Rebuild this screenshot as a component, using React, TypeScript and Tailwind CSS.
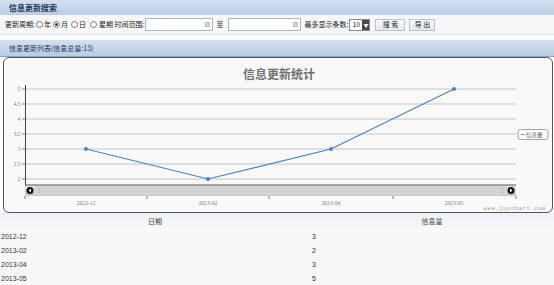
import React from "react";

const points = [
  { label: "2012-12", x: 85, v: 3 },
  { label: "2013-02", x: 207, v: 2 },
  { label: "2013-04", x: 330, v: 3 },
  { label: "2013-05", x: 453, v: 5 },
];

// value -> y in page coords (5 at 88, 2 at 178)
const yOf = (v: number) => 178 - (v - 2) * 30;

function Radio({ checked, className = "" }: { checked?: boolean; className?: string }) {
  return (
    <span className={`inline-flex items-center justify-center w-[7px] h-[7px] rounded-full border border-[#7a7a7a] bg-white ${className}`}>
      {checked && <span className="w-[3px] h-[3px] rounded-full bg-[#333]" />}
    </span>
  );
}

function DateInput({ w }: { w: string }) {
  return (
    <div className={`${w} h-[13px] border border-[#a9b8c9] bg-white flex items-center justify-end pr-[2px]`}>
      <span className="w-[5px] h-[5px] bg-[#d6d6d6] border border-[#bdbdbd]" />
    </div>
  );
}

function Chart() {
  const ys = [5, 4.5, 4, 3.5, 3, 2.5, 2];
  const ticks = [24, 146, 268, 392, 515];
  return (
    <svg width="550" height="156" viewBox="3 57 550 156" className="block">
      <text x="278" y="78" textAnchor="middle" fontSize="12" fontWeight="bold" fill="#707070" fontFamily="'Noto Sans CJK SC', sans-serif">
        信息更新统计
      </text>
      {ys.map((v) => (
        <g key={v}>
          <line x1="24" x2="515" y1={yOf(v)} y2={yOf(v)} stroke="#c4c4c4" strokeWidth="1" />
          <line x1="21" x2="24" y1={yOf(v)} y2={yOf(v)} stroke="#666" strokeWidth="0.8" />
          <text x="19.5" y={yOf(v) + 2} textAnchor="end" fontSize="5.5" fill="#777" fontFamily="'Liberation Serif', serif">
            {v}
          </text>
        </g>
      ))}
      <line x1="24.5" x2="24.5" y1="84" y2="184" stroke="#444" strokeWidth="1" />
      <defs>
        <linearGradient id="sb" x1="0" x2="0" y1="0" y2="1">
          <stop offset="0" stopColor="#e6e6e6" />
          <stop offset="1" stopColor="#c6c6c6" />
        </linearGradient>
      </defs>
      <rect x="24" y="184" width="491" height="11" fill="url(#sb)" />
      <line x1="24" x2="515" y1="184" y2="184" stroke="#555" strokeWidth="1" />
      <rect x="34" y="185" width="472" height="9" fill="#d4d4d4" />
      <circle cx="29" cy="189.5" r="3.5" fill="#111" />
      <path d="M30 187.5 L27.6 189.5 L30 191.5 Z" fill="#fff" />
      <circle cx="510" cy="189.5" r="3.5" fill="#111" />
      <path d="M509 187.5 L511.4 189.5 L509 191.5 Z" fill="#fff" />
      <line x1="38" x2="38" y1="187" y2="192" stroke="#888" strokeWidth="0.8" strokeDasharray="1 1" />
      <line x1="501" x2="501" y1="187" y2="192" stroke="#888" strokeWidth="0.8" strokeDasharray="1 1" />
      {ticks.map((t) => (
        <line key={t} x1={t} x2={t} y1="195" y2="198" stroke="#555" strokeWidth="0.8" />
      ))}
      {points.map((p) => (
        <text key={p.label} x={p.x} y="204" textAnchor="middle" fontSize="5.5" fill="#777" fontFamily="'Liberation Serif', serif">
          {p.label}
        </text>
      ))}
      <polyline
        points={points.map((p) => `${p.x},${yOf(p.v)}`).join(" ")}
        fill="none"
        stroke="#4f81bd"
        strokeWidth="1.2"
      />
      {points.map((p) => (
        <circle key={p.label} cx={p.x} cy={yOf(p.v)} r="2" fill="#4f81bd" />
      ))}
      <rect x="517" y="128.5" width="30" height="10" rx="2.5" fill="#fff" stroke="#8a8a8a" strokeWidth="0.8" />
      <line x1="520" x2="524" y1="133.5" y2="133.5" stroke="#4f81bd" strokeWidth="0.8" />
      <text x="525" y="135.5" fontSize="5.5" fill="#555" fontFamily="'Noto Sans CJK SC', sans-serif">
        信息量
      </text>
      <text x="545" y="209" textAnchor="end" fontSize="5.5" fill="#a0a0a0" letterSpacing="0.6" fontFamily="'Liberation Mono', monospace">
        www.joychart.com
      </text>
    </svg>
  );
}

export default function App() {
  return (
    <div className="w-[554px] h-[285px] overflow-hidden bg-white text-[#222] font-['Noto_Sans_CJK_SC','Noto_Sans',sans-serif]">
      {/* search header */}
      <div className="h-[15px] bg-gradient-to-b from-[#d3e0f0] to-[#b9cde5] flex items-center pl-[9px] text-[8px] font-bold text-[#1d3557]">
        信息更新搜索
      </div>

      {/* search form */}
      <div className="h-[20px] bg-[#f7f8fa] border-b border-[#dde3ea] flex items-center pl-[5px] text-[7px] text-[#222] leading-none">
        <span>更新周期:</span>
        <Radio className="ml-[1px]" />
        <span className="ml-[1px]">年</span>
        <Radio className="ml-[2px]" checked />
        <span className="ml-[1px]">月</span>
        <Radio className="ml-[3px]" />
        <span className="ml-[1px]">日</span>
        <Radio className="ml-[4px]" />
        <span className="ml-[2px]">星期 时间范围:</span>
        <div className="ml-[1px]">
          <DateInput w="w-[68px]" />
        </div>
        <span className="ml-[3px] mr-[5px]">至</span>
        <DateInput w="w-[73px]" />
        <span className="ml-[3px] mr-[1px]">最多显示条数:</span>
        <div className="w-[21px] h-[12px] border border-[#7f8a96] bg-white flex items-center justify-between pl-[2px]">
          <span>10</span>
          <span className="w-[7px] h-full bg-[#4a4a4a] text-white text-[5px] flex items-center justify-center">▼</span>
        </div>
        <button className="ml-[5px] w-[30px] h-[12px] border border-[#b9c3cf] bg-gradient-to-b from-[#fbfcfd] to-[#e3e8ee] text-[7px] leading-none">
          搜 索
        </button>
        <button className="ml-[4px] w-[26px] h-[12px] border border-[#b9c3cf] bg-gradient-to-b from-[#fbfcfd] to-[#e3e8ee] text-[7px] leading-none">
          导 出
        </button>
      </div>

      <div className="h-[5px] bg-white" />

      {/* list header */}
      <div className="h-[17px] bg-gradient-to-b from-[#d3e0f0] to-[#b9cde5] border-b border-[#8ea4be] flex items-center pl-[9px] text-[7px] text-[#1d3557]">
        信息更新列表(信息总量:13)
      </div>

      {/* chart panel */}
      <div className="ml-[3px] mr-[1px] h-[156px] border border-[#555] rounded-[6px] bg-[#f9f9f9] overflow-hidden">
        <Chart />
      </div>

      {/* table */}
      <div className="text-[7px] leading-none">
        <div className="h-[16px] grid grid-cols-[310px_1fr] bg-gradient-to-b from-[#eef2f6] to-[#f7f9fb] text-[#444]">
          <div className="flex items-center justify-center">日期</div>
          <div className="flex items-center justify-center">信息量</div>
        </div>
        <div className="bg-[#f8f8f8] border-b border-[#bbb] font-['Liberation_Sans','Noto_Sans_CJK_SC',sans-serif] text-[#333]">
          {points.map((p) => (
            <div key={p.label} className="h-[14px] grid grid-cols-[310px_1fr] items-center">
              <div className="pl-[1px]">{p.label}</div>
              <div className="pl-[2px]">{p.v}</div>
            </div>
          ))}
        </div>
      </div>
    </div>
  );
}
